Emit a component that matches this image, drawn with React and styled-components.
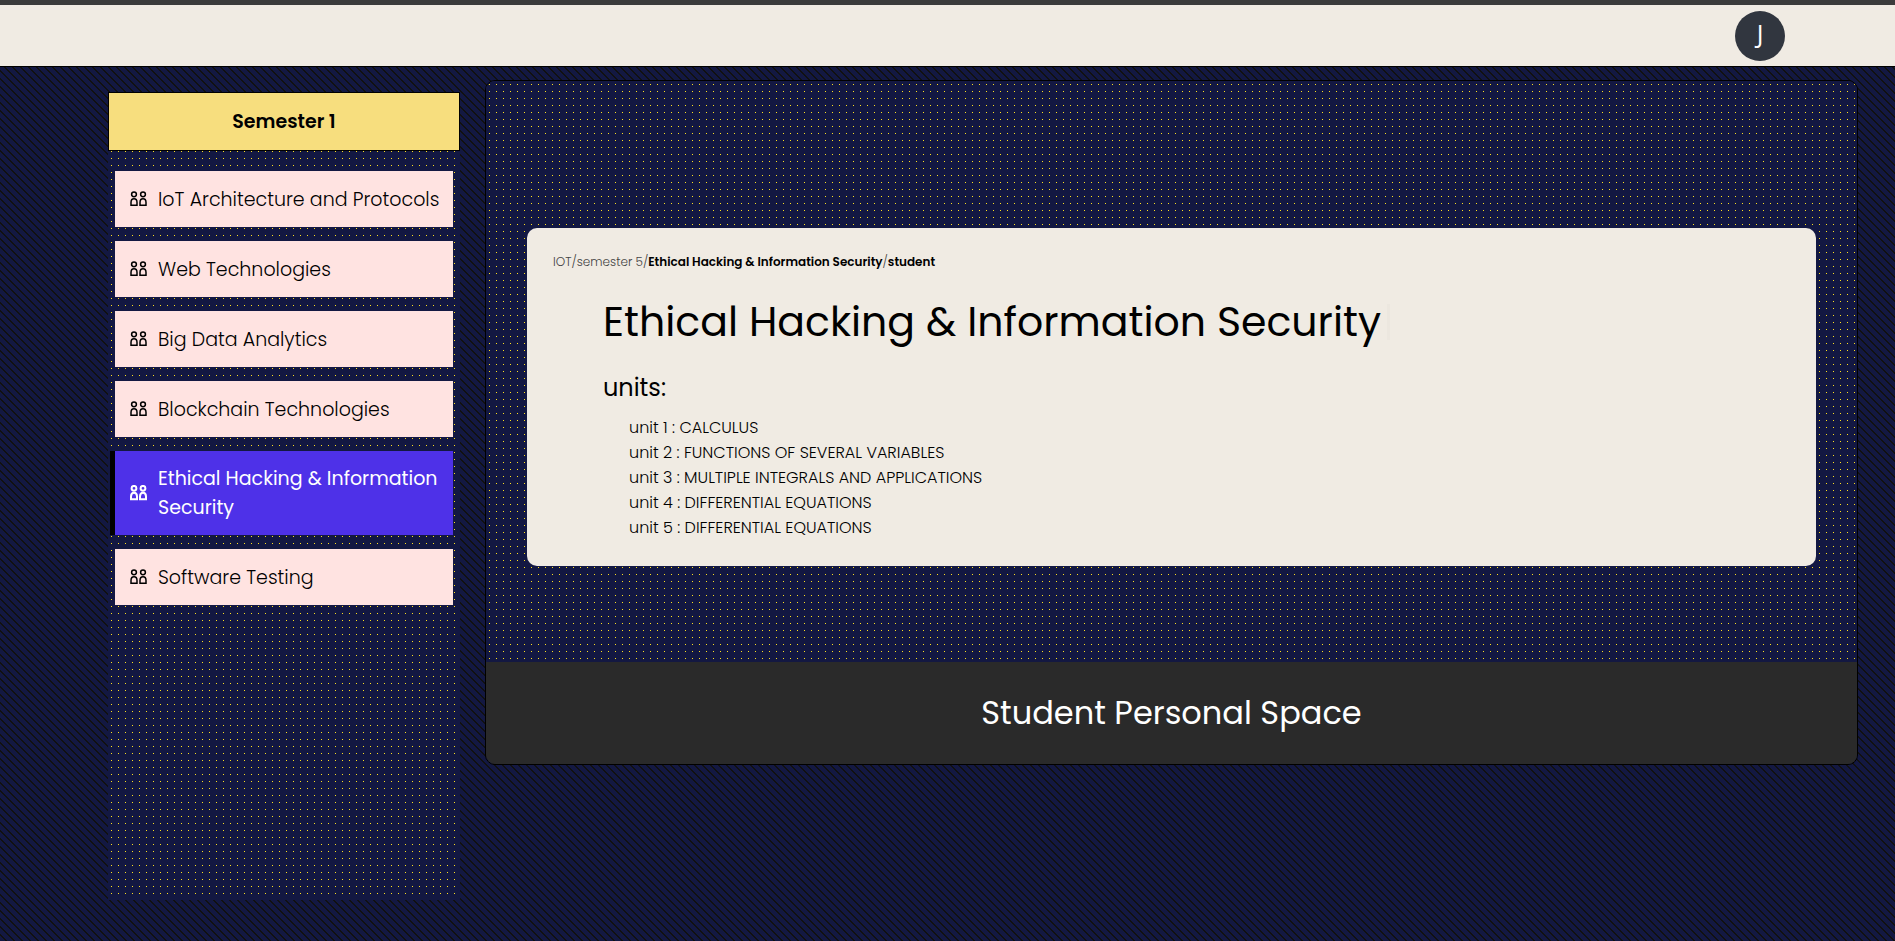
import React from "react";
import styled, { createGlobalStyle, css } from "styled-components";

const navy = "#131842";
const cream = "#f0ebe3";

const Global = createGlobalStyle`
  *, *::before, *::after { box-sizing: border-box; }
  body {
    margin: 0;
    min-height: 100vh;
    color: #000;
    font-family: Poppins, Inter, "Liberation Sans", sans-serif;
    font-feature-settings: "cv11";
    background: linear-gradient(
      45deg,
      #111 15%, ${navy} 15%, ${navy} 53%,
      #111 53%, #111 65%, ${navy} 65%
    ) 0 0 / 8px 8px;
  }
  ul, ol, h1, h2, p { margin: 0; padding: 0; }
  ul, ol { list-style: none; }
  button { font: inherit; font-feature-settings: inherit; border: 0; cursor: pointer; }
`;

const dots = css`
  background-image:
    linear-gradient(90deg, ${navy} 3px, transparent 3px, transparent 4px, ${navy} 4px),
    linear-gradient(${navy} 3px, #ffe11f 3px, #ffe11f 4px, ${navy} 4px);
  background-size: 7px 7px;
`;

const Header = styled.header`
  display: flex;
  align-items: center;
  justify-content: flex-end;
  height: 67px;
  padding-right: 110px;
  background: ${cream};
  border-top: 5px solid #3b3b3b;
  border-bottom: 1px solid #000;
`;

const Avatar = styled.button`
  width: 50px;
  height: 50px;
  padding: 0 0 6px;
  border-radius: 50%;
  background: #31363f;
  color: #fff;
  font-family: "Open Sans", sans-serif;
  font-size: 25px;
  font-weight: 500;
`;

const Page = styled.div`
  display: flex;
  align-items: flex-start;
  gap: 25px;
  padding: 13px 37px 40px 108px;
`;

const Sidebar = styled.nav`
  ${dots}
  flex: none;
  width: 352px;
  min-height: 808px;
  margin-top: 12px;
`;

const Semester = styled.button`
  display: block;
  width: 100%;
  height: 59px;
  border: 1px solid #000;
  background: #f7de7e;
  color: #000;
  font-size: 19px;
  font-weight: 600;
`;

const SubjectList = styled.ul`
  display: flex;
  flex-direction: column;
  gap: 14px;
  padding: 20px 7px 20px 2px;
`;

const Subject = styled.button`
  display: flex;
  align-items: center;
  gap: 11px;
  width: 100%;
  min-height: 56px;
  padding: 13px 8px 13px 15px;
  border-left: 5px solid ${(p) => (p.$active ? "#000" : "transparent")};
  background: ${(p) => (p.$active ? "#4e31e8" : "#ffe3e1")};
  background-clip: ${(p) => (p.$active ? "border-box" : "padding-box")};
  color: ${(p) => (p.$active ? "#fff" : "#000")};
  font-size: 19px;
  font-weight: ${(p) => (p.$active ? 400 : 300)};
  line-height: 29px;
  text-align: left;
`;

const GroupGlyph = styled.svg`
  flex: none;
  width: 17px;
  height: 16px;
  fill: none;
  stroke: currentColor;
  stroke-width: ${(p) => (p.$active ? 2 : 1.5)};
`;

const Panel = styled.main`
  flex: 1;
  min-width: 0;
  border: 1px solid #000;
  border-radius: 10px;
  overflow: hidden;
`;

const Stage = styled.div`
  ${dots}
  padding: 147px 41px 96px;
`;

const Card = styled.article`
  padding: 22px 26px;
  border-radius: 10px;
  background: ${cream};
`;

const Breadcrumb = styled.p`
  color: #444;
  font-size: 12px;
  font-weight: 300;
  line-height: 24px;
  b {
    color: #000;
    font-weight: 600;
  }
`;

const CardBody = styled.div`
  padding: 0 0 4px 50px;
`;

const Title = styled.h1`
  display: flex;
  align-items: center;
  gap: 6px;
  margin-top: 18px;
  font-size: 41px;
  font-weight: 400;
  line-height: 60px;
`;

const Caret = styled.span`
  width: 3px;
  height: 36px;
  background: #ece7df;
`;

const UnitsHeading = styled.h2`
  margin-top: 18px;
  font-size: 24px;
  font-weight: 400;
  line-height: 36px;
`;

const Units = styled.ol`
  margin-top: 9px;
  padding-left: 26px;
  font-size: 16px;
  font-weight: 300;
  line-height: 25px;
`;

const SpaceButton = styled.button`
  display: block;
  width: 100%;
  height: 102px;
  background: #2a2a2a;
  color: #fff;
  font-size: 32px;
`;

const subjects = [
  "IoT Architecture and Protocols",
  "Web Technologies",
  "Big Data Analytics",
  "Blockchain Technologies",
  "Ethical Hacking & Information Security",
  "Software Testing",
];

const units = [
  "CALCULUS",
  "FUNCTIONS OF SEVERAL VARIABLES",
  "MULTIPLE INTEGRALS AND APPLICATIONS",
  "DIFFERENTIAL EQUATIONS",
  "DIFFERENTIAL EQUATIONS",
];

const current = subjects[4];

function GroupIcon({ active }) {
  return (
    <GroupGlyph viewBox="0 0 17 16" $active={active} aria-hidden="true">
      <circle cx="4" cy="3.3" r="2.4" />
      <circle cx="13" cy="3.3" r="2.4" />
      <path d="M1 14.300V11.500C1 9 2.200 7.800 4 7.800s3 1.200 3 3.700v2.800z" />
      <path d="M10 14.300V11.500c0-2.500 1.200-3.700 3-3.700s3 1.200 3 3.700v2.800z" />
    </GroupGlyph>
  );
}

export default function App() {
  return (
    <>
      <Global />
      <Header>
        <Avatar type="button">J</Avatar>
      </Header>
      <Page>
        <Sidebar>
          <Semester type="button">Semester 1</Semester>
          <SubjectList>
            {subjects.map((name) => (
              <li key={name}>
                <Subject type="button" $active={name === current}>
                  <GroupIcon active={name === current} />
                  <span>{name}</span>
                </Subject>
              </li>
            ))}
          </SubjectList>
        </Sidebar>
        <Panel>
          <Stage>
            <Card>
              <Breadcrumb>
                IOT/semester 5/<b>{current}</b>/<b>student</b>
              </Breadcrumb>
              <CardBody>
                <Title>
                  {current}
                  <Caret />
                </Title>
                <UnitsHeading>units:</UnitsHeading>
                <Units>
                  {units.map((unit, i) => (
                    <li key={i}>{`unit ${i + 1} : ${unit}`}</li>
                  ))}
                </Units>
              </CardBody>
            </Card>
          </Stage>
          <SpaceButton type="button">Student Personal Space</SpaceButton>
        </Panel>
      </Page>
    </>
  );
}
